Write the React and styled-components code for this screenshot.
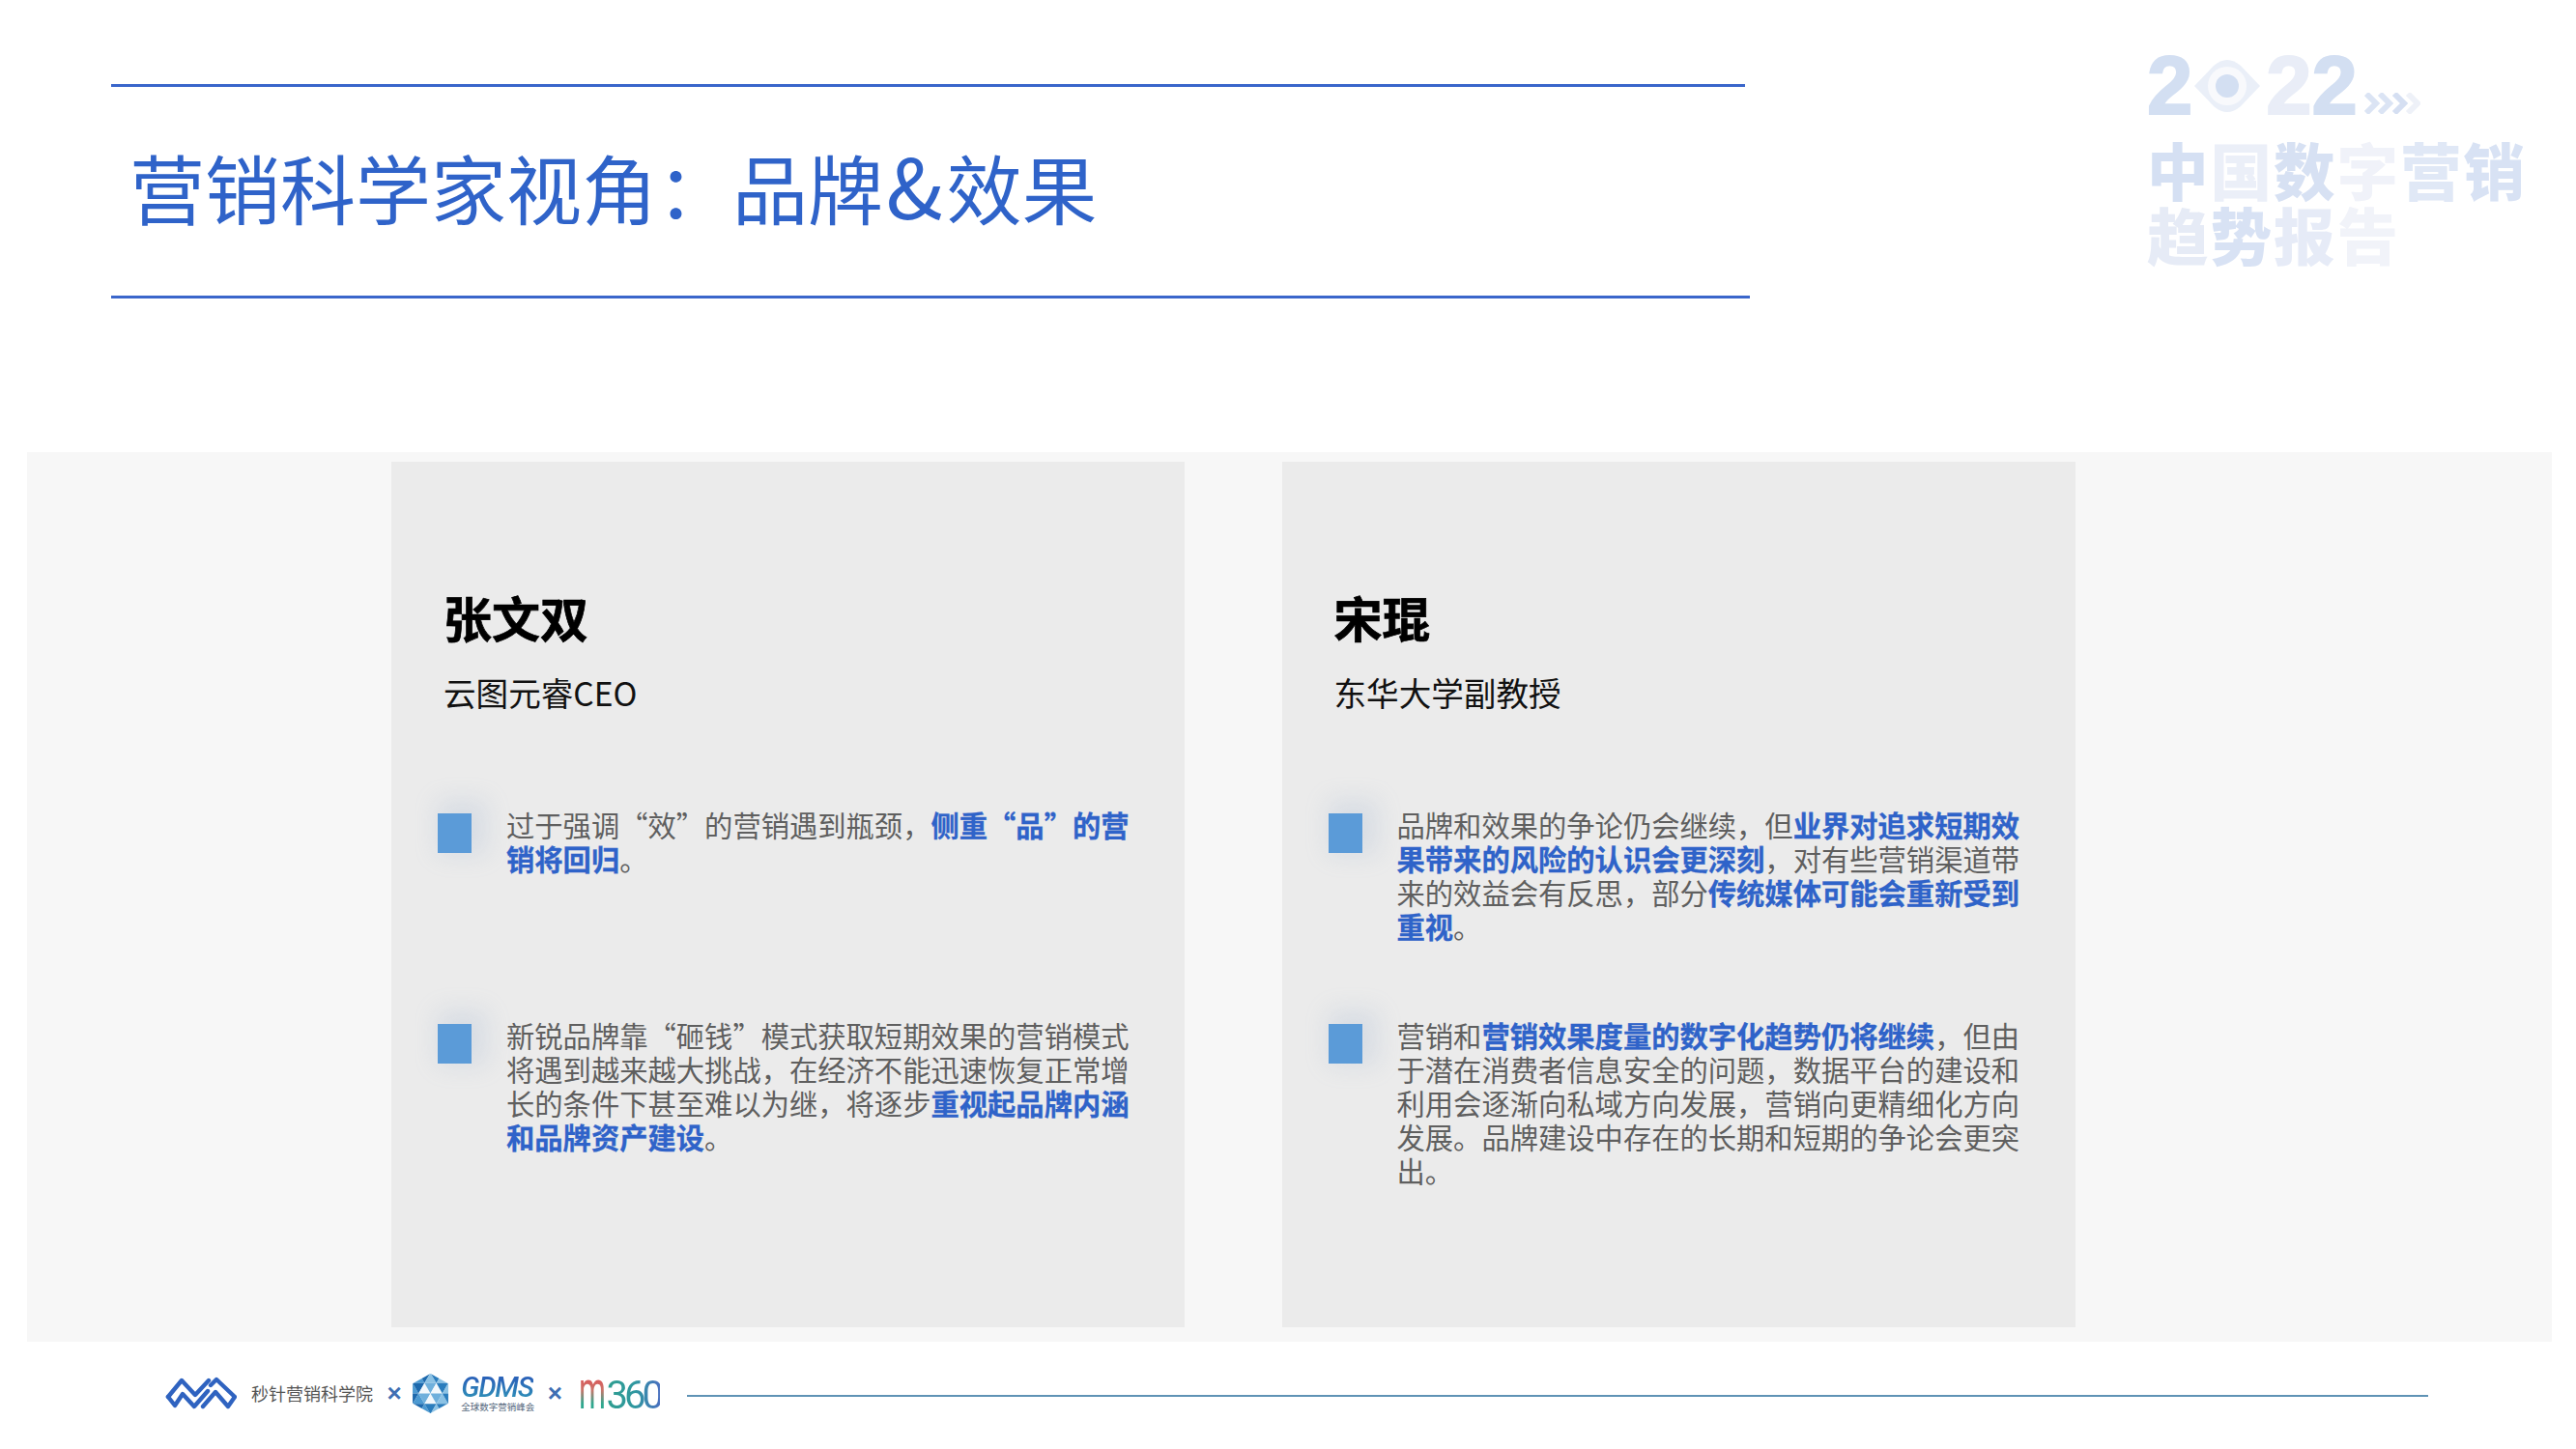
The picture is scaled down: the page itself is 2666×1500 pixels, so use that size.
import React from "react";
import styled, { createGlobalStyle } from "styled-components";

const Global = createGlobalStyle`
  html, body { margin: 0; padding: 0; background: #fff; }
  body { font-family: "Noto Sans CJK SC", "Liberation Sans", sans-serif; }
`;

const Page = styled.div`
  width: 2666px;
  height: 1500px;
  background: #fff;
  overflow: hidden;
  display: flex;
  flex-direction: column;
`;

const Header = styled.header`
  height: 468px;
  padding-left: 115px;
  display: flex;
  align-items: flex-start;
  box-sizing: border-box;
`;

const TitleBlock = styled.div`
  width: 1696px;
  margin-top: 87px;
  display: flex;
  flex-direction: column;
`;

const Rule = styled.div`
  height: 3px;
  width: ${(p) => p.$w}px;
  background: #3a66cb;
`;

const Title = styled.h1`
  margin: 0;
  height: 216px;
  box-sizing: border-box;
  padding: 0 0 0 19px;
  font-size: 78px;
  line-height: 206px;
  font-weight: 400;
  color: #2f63c9;
  white-space: nowrap;
`;

const Amp = styled.span`
  font-size: 86px;
  line-height: 1;
  margin: 0 4px 0 3px;
`;

const Watermark = styled.div`
  margin: 51px 0 0 411px;
  display: flex;
  flex-direction: column;
`;

const YearRow = styled.div`
  display: flex;
  align-items: center;
  height: 76px;
  font-family: "Liberation Sans", sans-serif;
  font-weight: 700;
  font-size: 85px;
  line-height: 76px;
`;

const YearDigit = styled.span`
  color: ${(p) => p.$c || "#d3dff2"};
  -webkit-text-stroke: 2px ${(p) => p.$c || "#d3dff2"};
`;

const EyeIcon = styled.svg`
  width: 68px;
  height: 58px;
  margin: 0 6px 0 2px;
`;

const ArrowsIcon = styled.svg`
  width: 58px;
  height: 22px;
  margin: 36px 0 0 7px;
`;

const WmLine = styled.div`
  display: flex;
  gap: 2px;
  margin-top: ${(p) => p.$mt}px;
  font-size: 63.5px;
  line-height: 66px;
  font-weight: 900;
`;

const WmChar = styled.span`
  color: ${(p) => p.$c};
`;

const Band = styled.section`
  margin-left: 28px;
  width: 2613px;
  height: 921px;
  box-sizing: border-box;
  background: #f7f7f7;
  padding: 10px 0 15px 377px;
  display: flex;
  gap: 100.5px;
`;

const Card = styled.article`
  width: 821px;
  background: #ebebeb;
  box-sizing: border-box;
  padding: 130px 0 0 54px;
  display: flex;
  flex-direction: column;
`;

const Name = styled.h2`
  margin: 0;
  font-size: 50px;
  line-height: 60px;
  font-weight: 700;
  color: #000;
  -webkit-text-stroke: 0.7px #000;
`;

const Role = styled.div`
  margin-top: 27px;
  font-size: 33.6px;
  line-height: 44px;
  color: #111;
`;

const Points = styled.ul`
  list-style: none;
  margin: 96.5px 0 0 -6px;
  padding: 0;
  display: grid;
  grid-auto-rows: 218px;
`;

const Point = styled.li`
  display: flex;
  align-items: flex-start;
  gap: 36px;
`;

const Marker = styled.span`
  flex: none;
  width: 35px;
  height: 41px;
  margin-top: 6px;
  background: #5b9bd8;
  box-shadow: 8px -6px 24px 8px rgba(150, 175, 205, 0.22);
`;

const Body = styled.p`
  margin: 0;
  width: 650px;
  font-size: 29.3px;
  line-height: 35px;
  color: #5f5f5f;
  white-space: nowrap;
`;

const Hi = styled.strong`
  color: #2f63c9;
  font-weight: 700;
  -webkit-text-stroke: 0.3px #2f63c9;
`;

const Footer = styled.footer`
  flex: 1;
  padding-left: 171px;
  display: flex;
  align-items: center;
`;

const Brands = styled.div`
  display: flex;
  align-items: center;
  margin-bottom: 5px;
`;

const WaveLogo = styled.svg`
  width: 74px;
  height: 34px;
  flex: none;
`;

const Academy = styled.span`
  margin-left: 15px;
  font-size: 18px;
  color: #555;
  white-space: nowrap;
`;

const Times = styled.span`
  font-family: "Liberation Sans", sans-serif;
  font-size: 26px;
  line-height: 30px;
  font-weight: 700;
  color: #3f6fb3;
  margin: ${(p) => p.$m};
`;

const HexLogo = styled.svg`
  width: 37px;
  height: 41px;
  flex: none;
`;

const Gdms = styled.div`
  margin-left: 13px;
  width: 76px;
  display: flex;
  flex-direction: column;
  align-items: flex-start;
`;

const GdmsName = styled.span`
  font-family: "Roboto", sans-serif;
  font-style: italic;
  font-weight: 500;
  font-size: 29px;
  line-height: 28px;
  letter-spacing: -1.2px;
  background: linear-gradient(180deg, #2a63b8 20%, #2f8fb8 90%);
  -webkit-background-clip: text;
  background-clip: text;
  color: transparent;
`;

const GdmsSub = styled.span`
  font-size: 9.5px;
  line-height: 13px;
  color: #55677c;
  white-space: nowrap;
`;

const M360 = styled.div`
  width: 83px;
  display: flex;
  align-items: baseline;
  font-family: "Roboto", sans-serif;
  font-weight: 400;
`;

const MGlyph = styled.span`
  display: inline-block;
  font-size: 56px;
  line-height: 40px;
  margin-right: -21px;
  transform: scaleX(0.57);
  transform-origin: left center;
  background: linear-gradient(180deg, #d85c5c 25%, #c9756a 50%, #2fa88f 85%);
  -webkit-background-clip: text;
  background-clip: text;
  color: transparent;
`;

const Digits = styled.span`
  font-size: 40px;
  font-weight: 400;
  line-height: 40px;
  letter-spacing: -4px;
  background: linear-gradient(90deg, #2f9f8f 0%, #2f97a0 55%, #4a70c0 100%);
  -webkit-background-clip: text;
  background-clip: text;
  color: transparent;
`;

const FootRule = styled.div`
  margin-left: 29px;
  width: 1802px;
  height: 2px;
  background: #5f93b5;
`;

const wmTop = [
  ["中", "#d5e0f3"], ["国", "#ebeff8"], ["数", "#d7e1f3"], ["字", "#f0f2f9"], ["营", "#e0e8f6"], ["销", "#d8e2f4"],
];
const wmBottom = [
  ["趋", "#e6ebf6"], ["势", "#d8e2f4"], ["报", "#e6ebf7"], ["告", "#f1f3f9"],
];

function hexTriangles() {
  const out = [];
  const s = 12;
  const h = 10.4;
  for (let row = -2; row < 2; row++) {
    for (let i = -4; i <= 4; i++) {
      const y0 = 20 + row * h;
      const x0 = 12 + (i * s) / 2;
      const up = (i + row + 40) % 2 === 0;
      const pts = up
        ? `${x0},${y0 + h} ${x0 + s / 2},${y0} ${x0 + s},${y0 + h}`
        : `${x0},${y0} ${x0 + s},${y0} ${x0 + s / 2},${y0 + h}`;
      const cx = x0 + s / 2 - 18;
      const cy = y0 + h / 2 - 20;
      const d = Math.hypot(cx, cy);
      let fill;
      if (d < 13) fill = up ? "#f2f8fc" : "#6fb0dc";
      else if (cx < -4) fill = up ? "#4c9ad2" : "#1d69ad";
      else fill = up ? "#8cc2e4" : "#2a7dbd";
      out.push(<polygon key={`${row}_${i}`} points={pts} fill={fill} />);
    }
  }
  return out;
}

const people = [
  {
    name: "张文双",
    role: "云图元睿CEO",
    points: [
      <>过于强调“效”的营销遇到瓶颈，<Hi>侧重“品”的营</Hi><br /><Hi>销将回归</Hi>。</>,
      <>新锐品牌靠“砸钱”模式获取短期效果的营销模式<br />将遇到越来越大挑战，在经济不能迅速恢复正常增<br />长的条件下甚至难以为继，将逐步<Hi>重视起品牌内涵</Hi><br /><Hi>和品牌资产建设</Hi>。</>,
    ],
  },
  {
    name: "宋琨",
    role: "东华大学副教授",
    points: [
      <>品牌和效果的争论仍会继续，但<Hi>业界对追求短期效</Hi><br /><Hi>果带来的风险的认识会更深刻</Hi>，对有些营销渠道带<br />来的效益会有反思，部分<Hi>传统媒体可能会重新受到</Hi><br /><Hi>重视</Hi>。</>,
      <>营销和<Hi>营销效果度量的数字化趋势仍将继续</Hi>，但由<br />于潜在消费者信息安全的问题，数据平台的建设和<br />利用会逐渐向私域方向发展，营销向更精细化方向<br />发展。品牌建设中存在的长期和短期的争论会更突<br />出。</>,
    ],
  },
];

export default function App() {
  return (
    <Page>
      <Global />
      <Header>
        <TitleBlock>
          <Rule $w={1691} />
          <Title>营销科学家视角：品牌<Amp>&amp;</Amp>效果</Title>
          <Rule $w={1696} />
        </TitleBlock>
        <Watermark>
          <YearRow>
            <YearDigit>2</YearDigit>
            <EyeIcon viewBox="0 0 68 58">
              <path d="M0 29 L20 8 Q34 -4 48 8 L68 29 L48 50 Q34 62 20 50 Z" fill="#eaeff8" />
              <circle cx="34" cy="29" r="20" fill="#f8f9fc" />
              <circle cx="34" cy="29" r="12" fill="#d3dff2" />
            </EyeIcon>
            <YearDigit $c="#e9edf7">2</YearDigit>
            <YearDigit>2</YearDigit>
            <ArrowsIcon viewBox="0 0 58 22">
              <path d="M2 1 L12 11 L2 21 M16 1 L26 11 L16 21" fill="none" stroke="#dbe4f4" strokeWidth="6" />
              <path d="M31 1 L41 11 L31 21" fill="none" stroke="#d5dff2" strokeWidth="6" />
              <path d="M45 1 L55 11 L45 21" fill="none" stroke="#eef1f8" strokeWidth="6" />
            </ArrowsIcon>
          </YearRow>
          <WmLine $mt={14}>
            {wmTop.map(([t, c]) => <WmChar key={t} $c={c}>{t}</WmChar>)}
          </WmLine>
          <WmLine $mt={1}>
            {wmBottom.map(([t, c]) => <WmChar key={t} $c={c}>{t}</WmChar>)}
          </WmLine>
        </Watermark>
      </Header>
      <Band>
        {people.map((p) => (
          <Card key={p.name}>
            <Name>{p.name}</Name>
            <Role>{p.role}</Role>
            <Points>
              {p.points.map((t, i) => (
                <Point key={i}>
                  <Marker />
                  <Body>{t}</Body>
                </Point>
              ))}
            </Points>
          </Card>
        ))}
      </Band>
      <Footer>
        <Brands>
          <WaveLogo viewBox="0 0 74 34">
            <g fill="none" stroke="#2f63c0" strokeWidth="4.4" strokeLinejoin="round" strokeLinecap="round">
              <path d="M3 21 L17 4 L31 19 L45 4" />
              <path d="M3 21 L10 30 L18 18 L30 31 L44 15" />
              <path d="M39 31 L52 16 L65 31 L72 21 L53 3 L47 9" />
            </g>
          </WaveLogo>
          <Academy>秒针营销科学院</Academy>
          <Times $m="0 11.5px 0 14.5px">×</Times>
          <HexLogo viewBox="0 0 36 40">
            <defs>
              <clipPath id="hexclip">
                <polygon points="18,0 36,10 36,30 18,40 0,30 0,10" />
              </clipPath>
            </defs>
            <g clipPath="url(#hexclip)">{hexTriangles()}</g>
          </HexLogo>
          <Gdms>
            <GdmsName>GDMS</GdmsName>
            <GdmsSub>全球数字营销峰会</GdmsSub>
          </Gdms>
          <Times $m="0 17.5px 0 13.5px">×</Times>
          <M360>
            <MGlyph>m</MGlyph>
            <Digits>360</Digits>
          </M360>
        </Brands>
        <FootRule />
      </Footer>
    </Page>
  );
}
